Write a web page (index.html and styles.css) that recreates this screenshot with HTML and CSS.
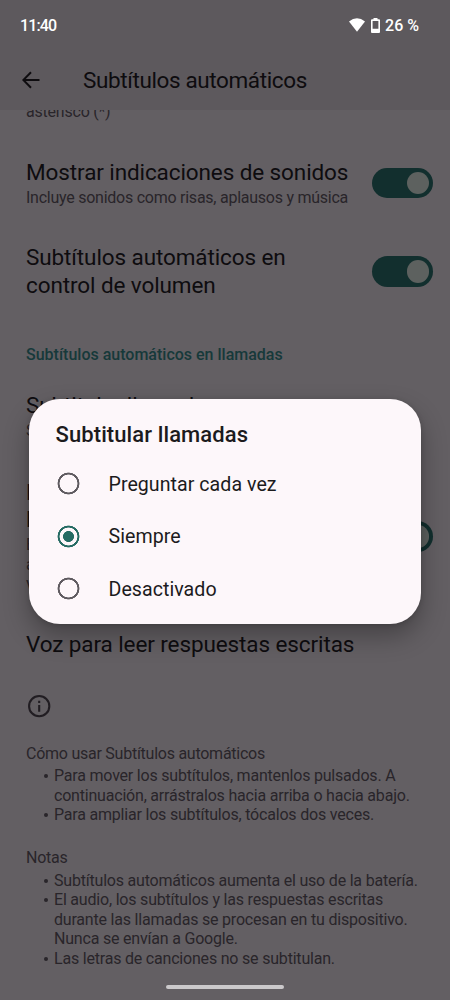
FILE: index.html
```html
<!DOCTYPE html>
<html lang="es">
<head>
<meta charset="utf-8">
<title>Subtítulos automáticos</title>
<link rel="stylesheet" href="styles.css">
</head>
<body>
<div class="screen">
  <header class="top">
    <div class="status">
      <span class="clock">11:40</span>
      <div class="indicators">
        <svg class="wifi" viewBox="0 0 16 14"><path d="M0 3.6Q8-3 16 3.6L8 13.8Z"/></svg>
        <svg class="battery" viewBox="0 0 9 15"><path fill-rule="evenodd" d="M2.5 0h4v1.3H8q1 0 1 1V14q0 1-1 1H1q-1 0-1-1V2.300q0-1 1-1h1.500ZM1.600 3v7.700h5.800V3Z"/></svg>
        <span class="percent">26 %</span>
      </div>
    </div>
    <div class="appbar">
      <svg class="back" viewBox="0 0 18 18"><path d="M17.500 9H1.500M9 1.200 1.300 9 9 16.800"/></svg>
      <h1 class="heading">Subtítulos automáticos</h1>
    </div>
  </header>

  <main class="content">
    <p class="small clipped">asterisco (*)</p>
    <section class="row row-sounds">
      <div class="label"><h2 class="title">Mostrar indicaciones de sonidos</h2><p class="small">Incluye sonidos como risas, aplausos y música</p></div>
      <span class="switch"></span>
    </section>
    <section class="row row-volume">
      <div class="label"><h2 class="title">Subtítulos automáticos en<br>control de volumen</h2></div>
      <span class="switch"></span>
    </section>
    <h3 class="category">Subtítulos automáticos en llamadas</h3>
    <section class="row row-calls">
      <div class="label"><h2 class="title">Subtitular llamadas</h2><p class="small">Siempre</p></div>
    </section>
    <section class="row row-replies">
      <div class="label"><h2 class="title">Escribir en<br>llamadas</h2><p class="small tight">Escribe y se lee<br>al interlocutor en<br>voz alta</p></div>
      <span class="switch"></span>
    </section>
    <section class="row row-voice"><h2 class="title">Voz para leer respuestas escritas</h2></section>
    <svg class="info" viewBox="0 0 24 24"><circle cx="12" cy="12" r="9.200"/><path d="M12 10.800v6.200M12 7v2"/></svg>
    <section class="notes">
      <p class="small">Cómo usar Subtítulos automáticos</p>
      <ul class="list">
        <li>Para mover los subtítulos, mantenlos pulsados. A<br>continuación, arrástralos hacia arriba o hacia abajo.</li>
        <li>Para ampliar los subtítulos, tócalos dos veces.</li>
      </ul>
      <p class="small notes-title">Notas</p>
      <ul class="list">
        <li>Subtítulos automáticos aumenta el uso de la batería.</li>
        <li>El audio, los subtítulos y las respuestas escritas<br>durante las llamadas se procesan en tu dispositivo.<br>Nunca se envían a Google.</li>
        <li>Las letras de canciones no se subtitulan.</li>
      </ul>
    </section>
  </main>

  <div class="dialog" role="dialog">
    <h2 class="dialog-title">Subtitular llamadas</h2>
    <div class="option"><span class="radio"></span><span>Preguntar cada vez</span></div>
    <div class="option"><span class="radio checked"></span><span>Siempre</span></div>
    <div class="option"><span class="radio"></span><span>Desactivado</span></div>
  </div>
  <div class="home-bar"></div>
</div>
</body>
</html>
```
FILE: styles.css
```css
* { box-sizing: border-box; margin: 0; padding: 0; }
body { font-family: Roboto, "Liberation Sans", sans-serif; }
.screen { position: relative; width: 450px; height: 1000px; overflow: hidden; display: flex; flex-direction: column; background: #635f63; color: #0e0c0f; }
.top { height: 110px; flex: none; background: #5d595d; }
.status { height: 48px; display: flex; justify-content: space-between; align-items: center; padding: 2px 31px 0 20px; color: #fff; font-size: 16px; font-weight: 500; }
.clock { letter-spacing: -.9px; }
.indicators { display: flex; align-items: center; }
.wifi { width: 16px; height: 14px; fill: #fff; }
.battery { width: 9px; height: 15px; fill: #fff; margin: 0 5px 0 6px; }
.appbar { display: flex; align-items: center; height: 62px; padding: 2px 0 0 22px; }
.back { width: 18px; height: 18px; fill: none; stroke: #0e0c0f; stroke-width: 2; }
.heading { margin-left: 43px; font-size: 22.500px; line-height: 28px; font-weight: 400; letter-spacing: -.38px; }
.content { flex: 1; min-height: 0; overflow: hidden; padding-left: 26px; }
.small { font-size: 16px; line-height: 19.600px; color: #29252a; font-weight: 400; letter-spacing: -.25px; white-space: nowrap; }
.title { font-size: 22.500px; line-height: 27.500px; font-weight: 400; letter-spacing: -.1px; white-space: nowrap; }
.clipped { margin-top: -8px; }
.row { display: flex; justify-content: space-between; align-items: center; padding-right: 17px; }
.label .small { margin-top: 2px; }
.label .tight { margin-top: 1px; }
.row-sounds { margin-top: 37px; }
.row-volume { margin-top: 36.400px; }
.category { margin-top: 45.800px; font-size: 16px; line-height: 19.600px; font-weight: 500; color: #16393a; }
.row-calls { margin-top: 27.400px; }
.row-replies { margin-top: 38px; }
.row-voice { margin-top: 37px; }
.switch { flex: none; width: 61px; height: 30.500px; border-radius: 16px; background: #122f2e; padding: 4px; display: flex; justify-content: flex-end; }
.switch::before { content: ""; width: 22.500px; height: 22.500px; border-radius: 50%; background: #5d615f; }
.info { display: block; width: 26.400px; height: 26.400px; margin-top: 35.200px; fill: none; stroke: #211d22; stroke-width: 1.900; }
.notes { margin-top: 23.700px; }
.list { list-style: none; margin-top: 3px; padding-left: 28px; font-size: 16px; line-height: 19.600px; color: #29252a; font-weight: 400; letter-spacing: -.2px; white-space: nowrap; }
.list li { display: flow-root; position: relative; }
.list li::before { content: ""; position: absolute; left: -10.500px; top: 8px; width: 4px; height: 4px; border-radius: 50%; background: #29252a; }
.notes-title { margin-top: 23.200px; }
.dialog { position: absolute; left: 29px; top: 399px; width: 392px; height: 224.500px; border-radius: 31px; background: #fdf7fa; box-shadow: 0 12px 26px rgba(0,0,0,.3), 0 1px 5px rgba(0,0,0,.15); padding: 22px 26.500px; color: #1c1b1d; }
.dialog-title { font-size: 22px; line-height: 28px; font-weight: 500; letter-spacing: .1px; margin-bottom: 8.500px; }
.option { height: 52.500px; display: flex; align-items: center; gap: 28px; font-size: 19.600px; letter-spacing: .04px; white-space: nowrap; }
.option span:last-child { padding-top: 1px; }
.radio { flex: none; width: 25px; height: 23px; background: radial-gradient(circle, transparent 8.700px, #5f5b60 9.200px, #5f5b60 10.700px, transparent 11.200px); }
.radio.checked { background: radial-gradient(circle, #256b63 5.200px, transparent 5.800px, transparent 8.700px, #256b63 9.200px, #256b63 10.700px, transparent 11.200px); }
.home-bar { position: absolute; left: 166px; top: 984.500px; width: 118px; height: 4.500px; border-radius: 3px; background: #cbc9cb; }
```
